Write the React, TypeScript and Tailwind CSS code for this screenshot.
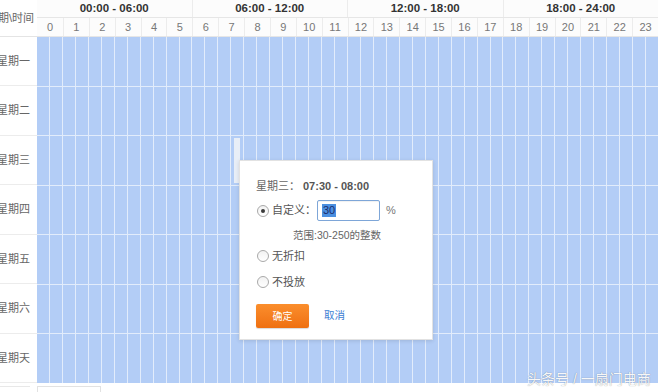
import React from 'react';

const days = ['星期一', '星期二', '星期三', '星期四', '星期五', '星期六', '星期天'];
const groups = ['00:00 - 06:00', '06:00 - 12:00', '12:00 - 18:00', '18:00 - 24:00'];
const hours = Array.from({ length: 24 }, (_, i) => i);
const halves = Array.from({ length: 48 }, (_, i) => i);

const Radio: React.FC<{ checked?: boolean }> = ({ checked }) => (
  <span className="w-[12px] h-[12px] rounded-full border border-[#a9a9a9] bg-gradient-to-b from-[#f2f2f2] to-white flex items-center justify-center shrink-0">
    {checked && <span className="w-[4px] h-[4px] rounded-full bg-[#3a3a3a]" />}
  </span>
);

const App: React.FC = () => {
  return (
    <div
      className="relative w-[664px] h-[392px] overflow-hidden bg-white text-[#555]"
      style={{ fontFamily: '"Liberation Sans", "Noto Sans CJK SC", sans-serif' }}
    >
      <div className="flex w-[658px]">
        {/* Day labels */}
        <div className="w-[37px] shrink-0 flex flex-col">
          <div className="h-[37px] border-b border-[#e4e4e4] flex items-center justify-end pr-[3px] overflow-hidden whitespace-nowrap text-[11px] text-[#666]">
            星期\时间
          </div>
          <div className="h-[346px] grid grid-rows-7">
            {days.map((d) => (
              <div
                key={d}
                className="flex items-center justify-end pr-[7px] overflow-hidden whitespace-nowrap text-[11px] text-[#666] border-b border-[#ececec]"
              >
                {d}
              </div>
            ))}
          </div>
        </div>

        {/* Time grid */}
        <div className="flex-1 flex flex-col">
          <div className="h-[18px] flex border-b border-[#e6e6e6] bg-[#fcfcfc]">
            {groups.map((g, i) => (
              <div
                key={g}
                className={`flex-1 flex items-center justify-center text-[11.5px] font-bold text-[#333] ${i > 0 ? 'border-l border-[#ececec]' : ''}`}
              >
                {g}
              </div>
            ))}
          </div>
          <div className="h-[19px] grid grid-cols-[repeat(24,minmax(0,1fr))] border-b border-[#e6e6e6] bg-[#fcfcfc]">
            {hours.map((h) => (
              <div
                key={h}
                className={`flex items-center justify-center text-[11px] text-[#777] ${h > 0 ? 'border-l border-[#ececec]' : ''}`}
              >
                {h}
              </div>
            ))}
          </div>
          <div className="h-[346px] grid grid-rows-7 gap-px bg-[#e2ecfb]">
            {days.map((d, r) => (
              <div key={d} className="grid grid-cols-[repeat(48,minmax(0,1fr))] gap-px">
                {halves.map((c) =>
                  r === 2 && c === 15 ? (
                    <div key={c} className="bg-[#b3cdf6] flex px-[3px] py-[2px]">
                      <div className="flex-1 bg-[#e8eef7]" />
                    </div>
                  ) : (
                    <div key={c} className="bg-[#b3cdf6]" />
                  )
                )}
              </div>
            ))}
          </div>
        </div>
      </div>

      <div className="mt-[3px] flex items-start">
        <div className="w-[30px] border-t border-[#e8e8e8]" />
        <div className="ml-[7px] w-[64px] h-[6px] border border-b-0 border-[#e2e2e2]" />
      </div>

      {/* Discount popup */}
      <div className="absolute left-[239px] top-[160px] w-[194px] h-[180px] bg-white border border-[#e2e2e2] shadow-[0_1px_4px_rgba(0,0,0,0.12)] pl-[16px] pt-[17px] text-[11px]">
        <div className="h-[16px] flex items-center">
          <span className="text-[#666]">星期三：</span>
          <span className="ml-[3px] font-bold text-[#555]">07:30 - 08:00</span>
        </div>

        <div className="mt-[6px] h-[21px] flex items-center">
          <span className="ml-[1px]">
            <Radio checked />
          </span>
          <span className="ml-[3px] text-[#555]">自定义：</span>
          <div className="ml-[1px] w-[63px] h-[21px] border border-[#7ea6d8] rounded-[2px] flex items-center pl-[4px] shadow-[inset_0_1px_1px_rgba(0,0,0,0.06)]">
            <span className="bg-[#4a8fe0] text-[#1c2c6a] leading-[13px] px-[1px]">30</span>
          </div>
          <span className="ml-[6px] text-[#777]">%</span>
        </div>

        <div className="mt-[8px] h-[14px] pl-[37px] flex items-center text-[10.5px] text-[#666]">
          范围:30-250的整数
        </div>

        <div className="mt-[5px] h-[16px] flex items-center">
          <span className="ml-[1px]">
            <Radio />
          </span>
          <span className="ml-[3px] text-[#555]">无折扣</span>
        </div>

        <div className="mt-[10px] h-[16px] flex items-center">
          <span className="ml-[1px]">
            <Radio />
          </span>
          <span className="ml-[3px] text-[#555]">不投放</span>
        </div>

        <div className="mt-[14px] flex items-center">
          <button className="w-[53px] h-[24px] rounded-[2px] bg-gradient-to-b from-[#fb8e2c] to-[#ef7010] text-white text-[10px] shadow-[0_1px_1px_rgba(0,0,0,0.15)]">
            确定
          </button>
          <span className="ml-[15px] text-[10.5px] text-[#3b7dd3]">取消</span>
        </div>
      </div>

      {/* Watermark */}
      <div className="absolute left-[527px] top-[369px] text-[14px] text-white/95 whitespace-nowrap [text-shadow:0_0_1px_rgba(0,0,0,0.45)]">
        头条号 / 一扇门电商
      </div>
    </div>
  );
};

export default App;
